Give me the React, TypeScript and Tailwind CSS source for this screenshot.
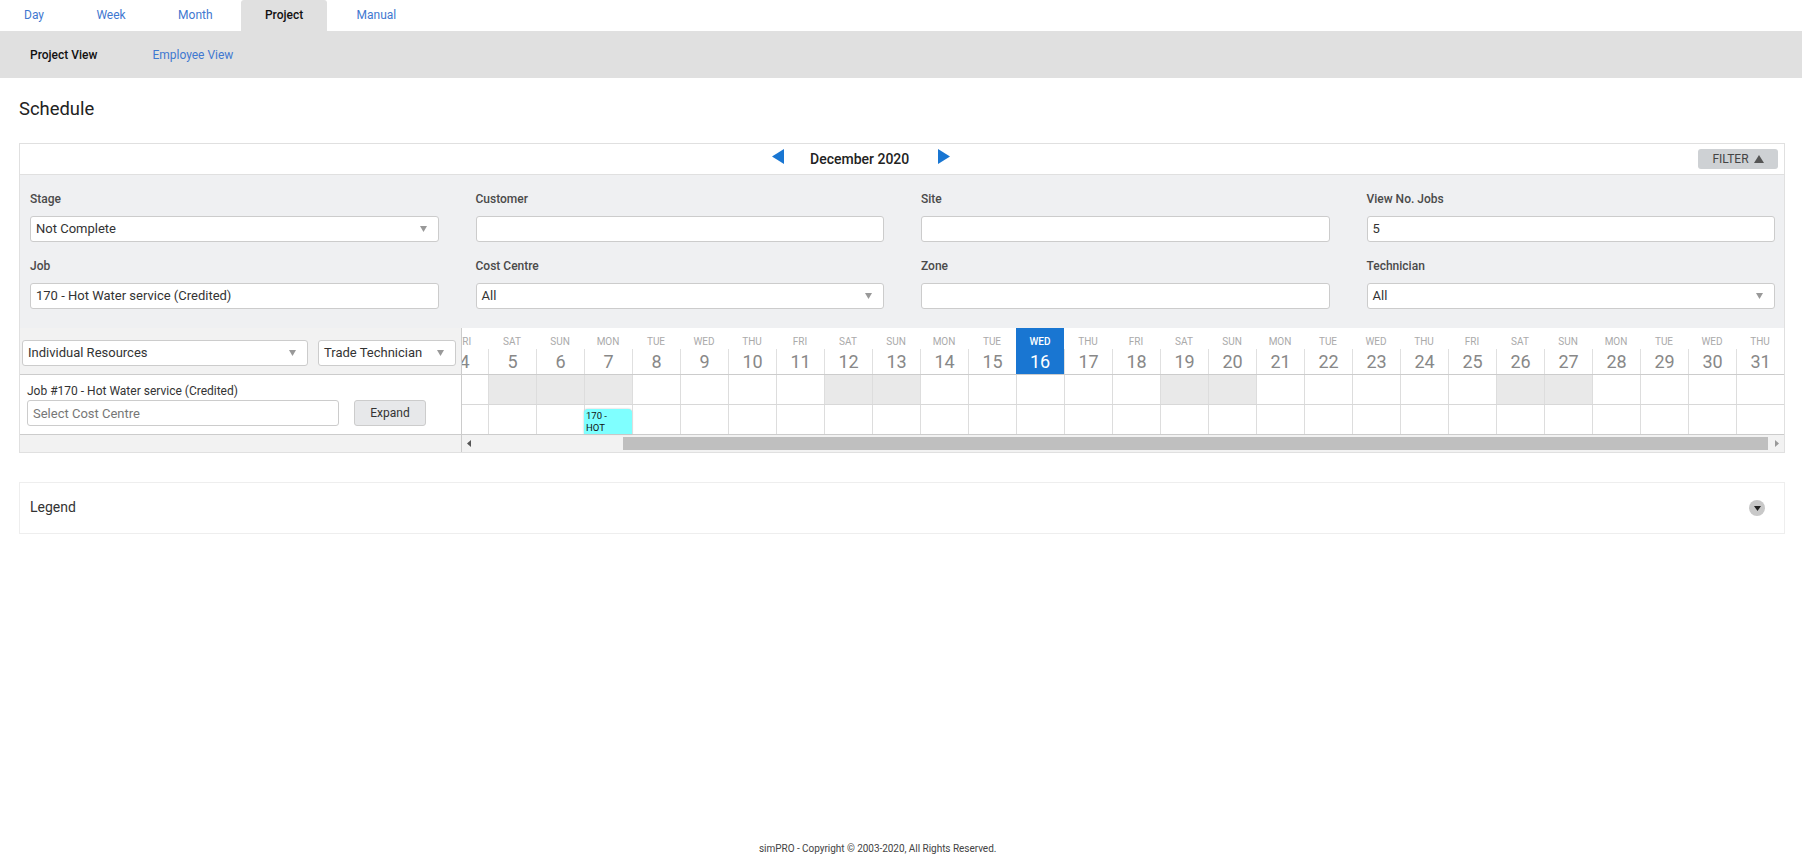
const days = [
  { n: 4, d: "FRI" }, { n: 5, d: "SAT" }, { n: 6, d: "SUN" }, { n: 7, d: "MON" }, { n: 8, d: "TUE" },
  { n: 9, d: "WED" }, { n: 10, d: "THU" }, { n: 11, d: "FRI" }, { n: 12, d: "SAT" }, { n: 13, d: "SUN" },
  { n: 14, d: "MON" }, { n: 15, d: "TUE" }, { n: 16, d: "WED" }, { n: 17, d: "THU" }, { n: 18, d: "FRI" },
  { n: 19, d: "SAT" }, { n: 20, d: "SUN" }, { n: 21, d: "MON" }, { n: 22, d: "TUE" }, { n: 23, d: "WED" },
  { n: 24, d: "THU" }, { n: 25, d: "FRI" }, { n: 26, d: "SAT" }, { n: 27, d: "SUN" }, { n: 28, d: "MON" },
  { n: 29, d: "TUE" }, { n: 30, d: "WED" }, { n: 31, d: "THU" },
];

// first row greys out weekends, plus the 7th
const greyDays = [5, 6, 7, 12, 13, 19, 20, 26, 27];

function Caret() {
  return (
    <svg width="7" height="6" viewBox="0 0 7 6" className="shrink-0">
      <path d="M0 0h7L3.5 6z" fill="#999" />
    </svg>
  );
}

function Select({ value, className = "" }: { value: string; className?: string }) {
  return (
    <div className={`h-[26px] flex items-center justify-between pl-[5px] pr-[11px] bg-white border border-[#ccc] rounded-[3px] text-[13px] text-[#333] ${className}`}>
      <span>{value}</span>
      <Caret />
    </div>
  );
}

function Input({ value }: { value?: string }) {
  return (
    <div className="h-[26px] flex items-center pl-[5px] bg-white border border-[#ccc] rounded-[3px] text-[13px] text-[#333]">
      {value}
    </div>
  );
}

function Field({ label, children }: { label: string; children: React.ReactNode }) {
  return (
    <div>
      <div className="h-4 mb-[9px] text-[12px] leading-4 font-medium text-[#4a4a4a]">{label}</div>
      {children}
    </div>
  );
}

export default function App() {
  return (
    <div className="h-[854px] overflow-hidden flex flex-col bg-white font-[Roboto,sans-serif]">
      {/* Tabs */}
      <div className="h-[31px] flex gap-[4.4px] text-[12px] text-[#3f78d0]">
        <a className="px-6 leading-[31px]">Day</a>
        <a className="px-6 leading-[31px]">Week</a>
        <a className="px-6 leading-[31px]">Month</a>
        <a className="px-6 leading-[31px] font-medium text-[#111] bg-[#e0e0e0] rounded-t-[3px]">Project</a>
        <a className="px-6 leading-[31px] ml-[1px]">Manual</a>
      </div>
      <div className="h-[47px] flex items-center gap-[55px] px-[30px] bg-[#e0e0e0] text-[12px]">
        <a className="font-medium text-[#111]">Project View</a>
        <a className="text-[#3f78d0]">Employee View</a>
      </div>

      <div className="ml-[19px] mr-[17px]">
        <h1 className="mt-[21px] mb-[24px] text-[18.4px] leading-5 font-normal text-[#222]">Schedule</h1>

        {/* Schedule card */}
        <div className="border border-[#e0e0e0]">
          <div className="h-[31px] flex items-center pl-[752px] pr-[6px] border-b border-[#e0e0e0]">
            <svg width="12" height="15" viewBox="0 0 12 15" className="-mt-[5px]">
              <path d="M12 0v15L0 7.5z" fill="#1976d2" />
            </svg>
            <span className="ml-[26px] mt-[1px] text-[14px] font-medium text-[#222]">December 2020</span>
            <svg width="12" height="15" viewBox="0 0 12 15" className="ml-[29px] -mt-[5px]">
              <path d="M0 0v15l12-7.5z" fill="#1976d2" />
            </svg>
            <button className="ml-auto w-20 h-5 flex items-center justify-center gap-[5px] bg-[#ced1d4] rounded-[3px] text-[12px] text-[#444]">
              FILTER
              <svg width="10" height="8" viewBox="0 0 10 8">
                <path d="M5 0l5 8H0z" fill="#555" />
              </svg>
            </button>
          </div>

          {/* Filters */}
          <div className="grid grid-cols-4 gap-x-[37px] gap-y-4 pt-4 pb-[19px] pl-[10px] pr-[9px] bg-[#eff0f2]">
            <Field label="Stage"><Select value="Not Complete" /></Field>
            <Field label="Customer"><Input /></Field>
            <Field label="Site"><Input /></Field>
            <Field label="View No. Jobs"><Input value="5" /></Field>
            <Field label="Job"><Input value="170 - Hot Water service (Credited)" /></Field>
            <Field label="Cost Centre"><Select value="All" /></Field>
            <Field label="Zone"><Input /></Field>
            <Field label="Technician"><Select value="All" /></Field>
          </div>

          {/* Timeline */}
          <div className="flex">
            <div className="w-[442px] shrink-0 border-r border-[#ccc] bg-[#f2f2f2]">
              <div className="h-[47px] flex gap-[10px] pt-3 pl-[2px] border-b border-[#ccc]">
                <Select value="Individual Resources" className="w-[286px]" />
                <Select value="Trade Technician" className="w-[138px]" />
              </div>
              <div className="h-[60px] px-[7px] pt-[9px] bg-white border-b border-[#ccc]">
                <div className="h-4 text-[12px] leading-[15px] text-[#333]">Job #170 - Hot Water service (Credited)</div>
                <div className="flex gap-[15px]">
                  <div className="w-[312px] h-[26px] flex items-center pl-[5px] pt-[1px] bg-white border border-[#ccc] rounded-[3px] text-[13px] text-[#777]">
                    Select Cost Centre
                  </div>
                  <button className="w-[72px] h-[26px] bg-[#e7e8ea] border border-[#ccc] rounded-[3px] text-[12px] text-[#333]">
                    Expand
                  </button>
                </div>
              </div>
              <div className="h-[17px]" />
            </div>

            <div className="flex-1 min-w-0 overflow-hidden">
              <div className="flex -ml-[22px] h-[47px] border-b border-[#ccc]">
                {days.map((day) => (
                  <div key={day.n} className={`w-12 shrink-0 text-center ${day.n === 16 ? "bg-[#1976d2] text-white" : ""}`}>
                    <div className={`h-[21px] pt-[8px] text-[10px] leading-[12px] ${day.n === 16 ? "font-medium" : "text-[#aaa]"}`}>{day.d}</div>
                    <div className={`h-[25px] text-[18px] leading-[25px] ${day.n === 16 ? "" : "border-l border-[#e0e0e0] text-[#888]"}`}>{day.n}</div>
                  </div>
                ))}
              </div>
              <div className="flex -ml-[22px] h-[30px] border-b border-[#d8d8d8]">
                {days.map((day) => (
                  <div key={day.n} className={`w-12 shrink-0 border-l border-[#ddd] ${greyDays.includes(day.n) ? "bg-[#e9e9e9]" : ""}`} />
                ))}
              </div>
              <div className="flex -ml-[22px] h-[30px] border-b border-[#ccc]">
                {days.map((day) => (
                  <div key={day.n} className="relative w-12 shrink-0 border-l border-[#ddd]">
                    {day.n === 7 && (
                      <div className="absolute bottom-0 -left-px w-12 h-[25px] pl-[2px] pt-[1px] bg-[#7fffff] rounded-t-[4px] shadow-[0_0_2px_#bbb] text-[9.5px] leading-[12px] text-[#111] overflow-hidden">
                        170 -<br />HOT
                      </div>
                    )}
                  </div>
                ))}
              </div>
              <div className="h-[17px] flex items-center pl-[5px] bg-[#f2f2f2]">
                <svg width="4" height="7" viewBox="0 0 4 7">
                  <path d="M4 0v7L0 3.5z" fill="#555" />
                </svg>
                <div className="ml-[152px] w-[1145px] h-[13px] bg-[#bfbfbf]" />
                <svg width="4" height="7" viewBox="0 0 4 7" className="ml-[7px]">
                  <path d="M0 0v7l4-3.5z" fill="#999" />
                </svg>
              </div>
            </div>
          </div>
        </div>

        {/* Legend */}
        <div className="mt-[29px] h-[52px] flex items-center justify-between pl-[10px] pr-[19px] border border-[#eee]">
          <span className="-mt-[2px] text-[14px] text-[#333]">Legend</span>
          <div className="w-4 h-4 flex items-center justify-center rounded-full bg-[#c8c8c8]">
            <svg width="7" height="5" viewBox="0 0 7 5">
              <path d="M0 0h7L3.5 5z" fill="#222" />
            </svg>
          </div>
        </div>
      </div>

      <footer className="mt-auto pl-[759px] text-[10px] leading-[10px] tracking-[-0.04px] text-[#444]">
        simPRO - Copyright © 2003-2020, All Rights Reserved.
      </footer>
    </div>
  );
}
